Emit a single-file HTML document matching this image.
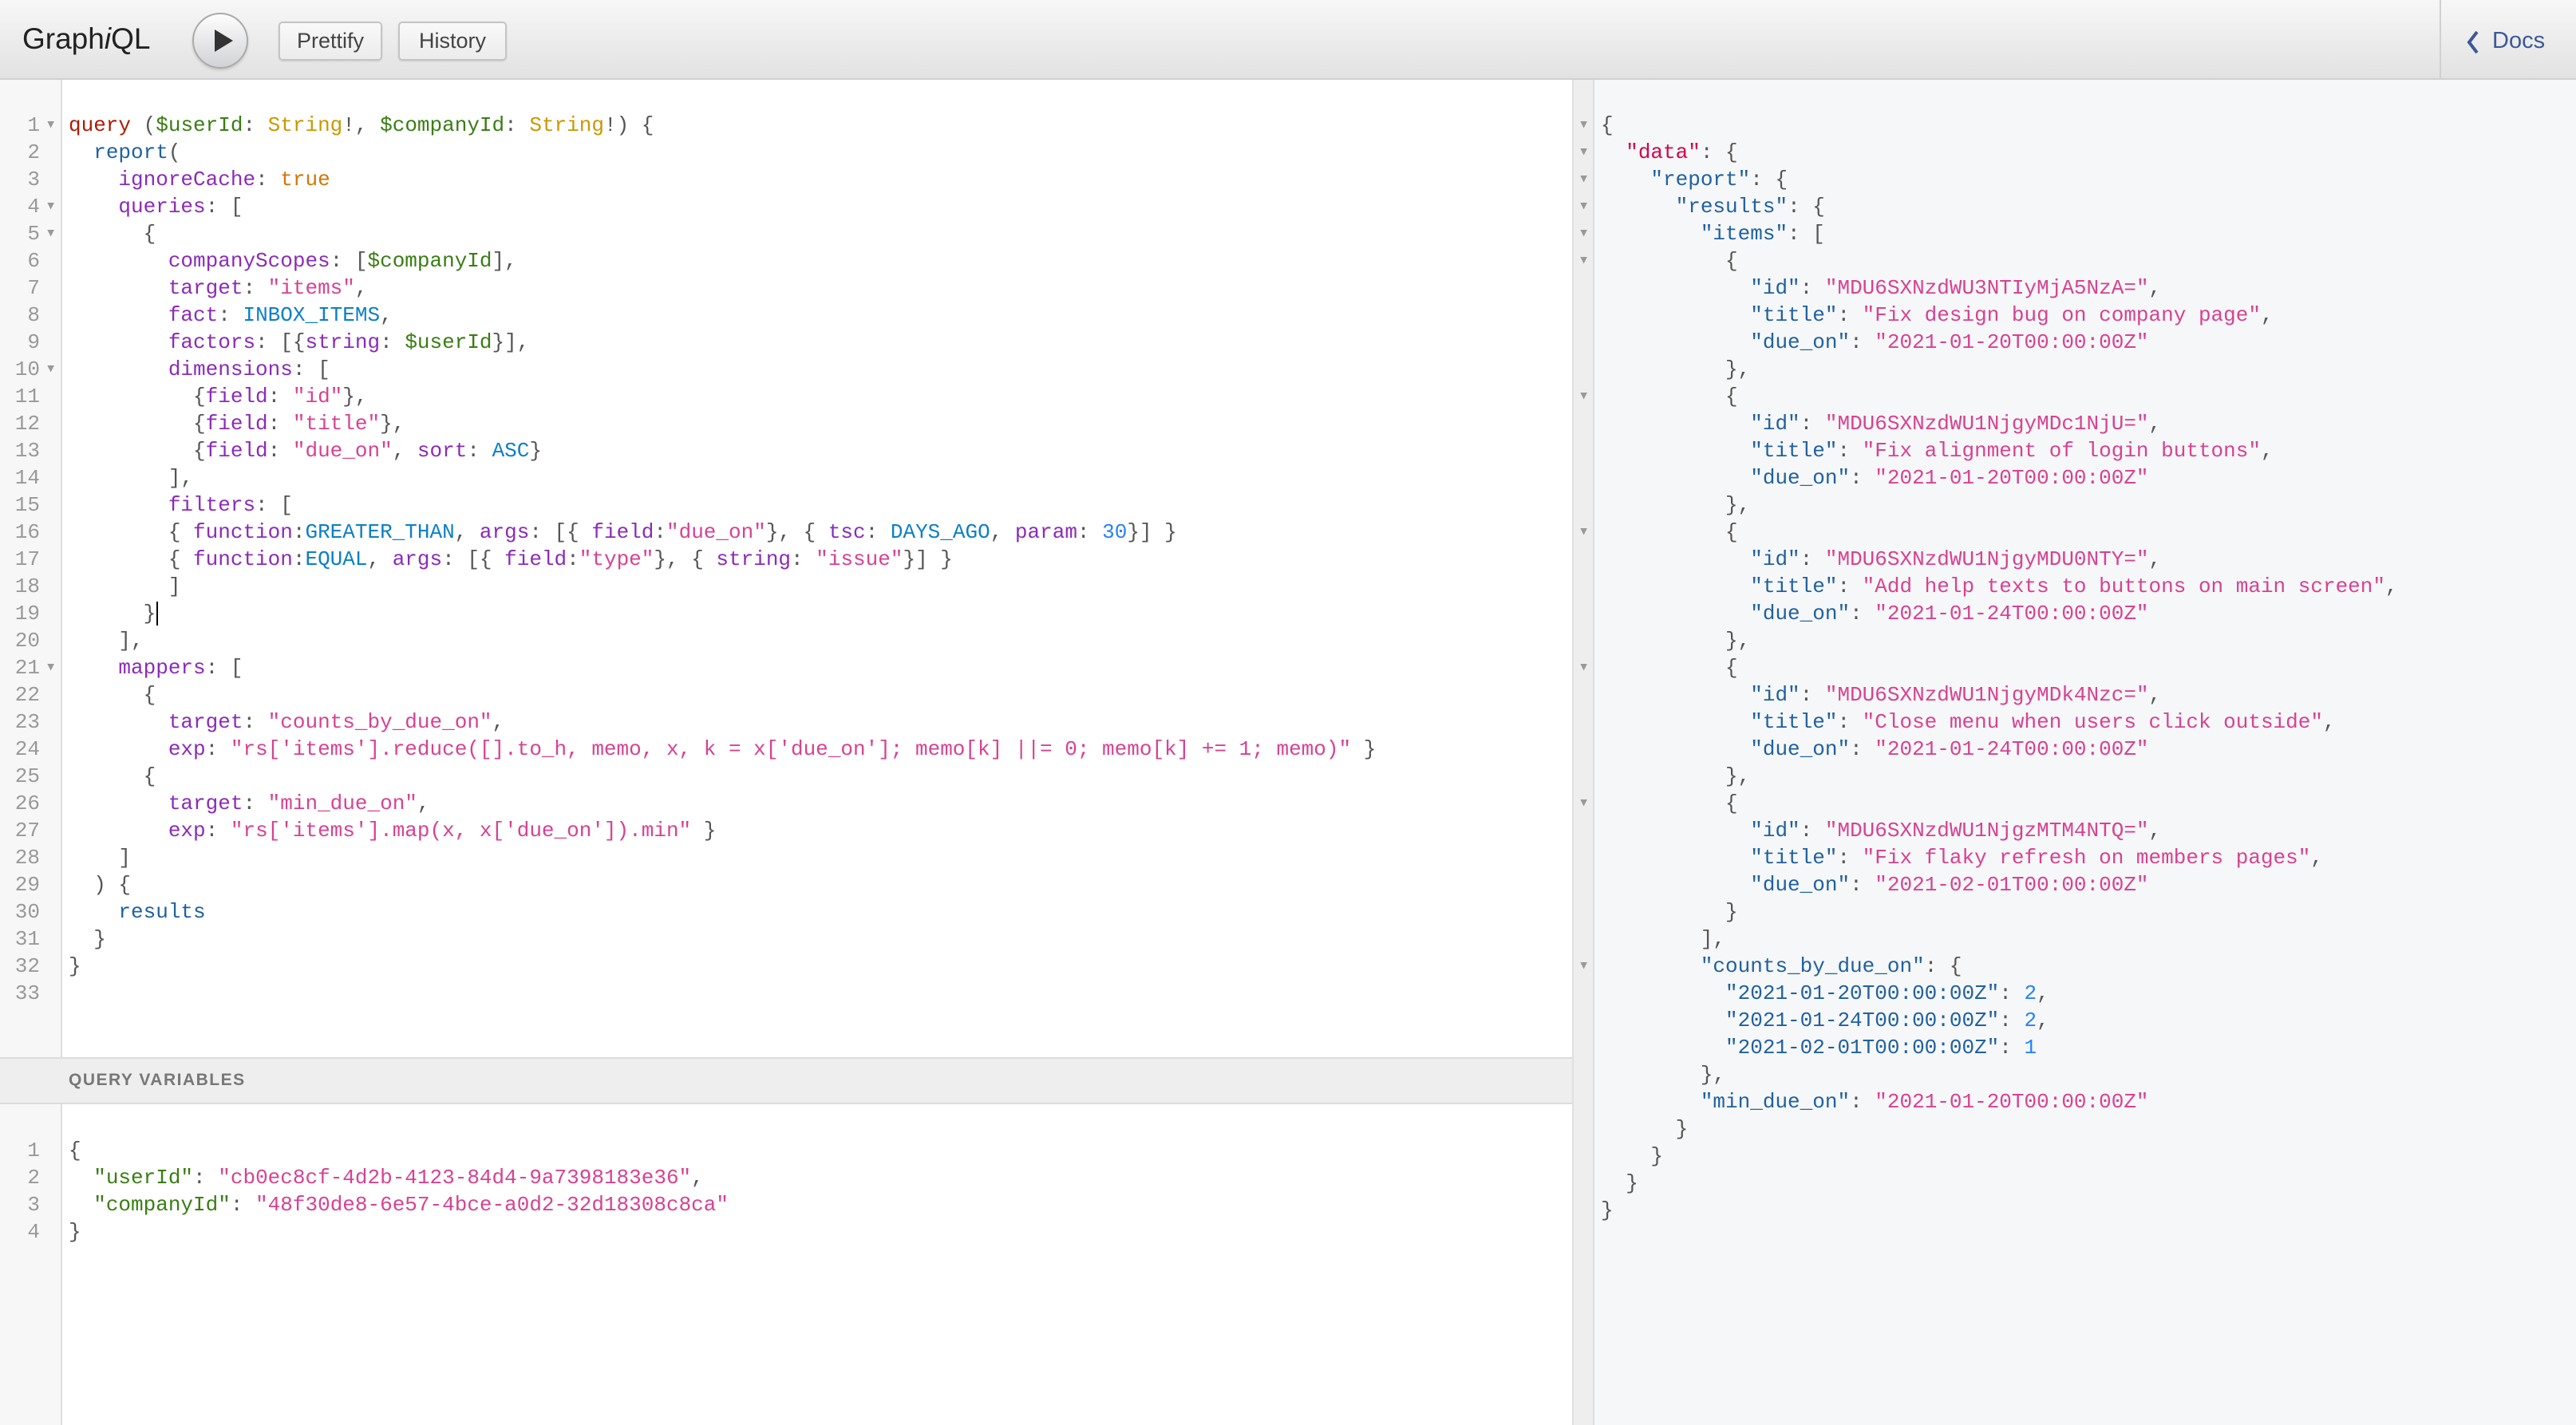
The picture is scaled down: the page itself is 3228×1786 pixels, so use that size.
<!DOCTYPE html>
<html><head><meta charset="utf-8"><style>
*{margin:0;padding:0;box-sizing:border-box}
html,body{width:3228px;height:1786px;overflow:hidden;background:#fff;font-family:"Liberation Sans",sans-serif}
.hdr{position:absolute;left:0;top:0;width:3228px;height:100px;background:linear-gradient(#f7f7f7,#e2e2e2);border-bottom:2px solid #d0d0d0}
.title{position:absolute;left:28px;top:28px;font-size:37px;color:#222}
.play{position:absolute;left:241px;top:16px;width:70px;height:70px;border-radius:50%;background:linear-gradient(#fdfdfd,#d2d3d6);border:2px solid #aaa;box-shadow:0 2px 3px rgba(0,0,0,.15)}
.play:after{content:"";position:absolute;left:26px;top:19px;border-left:23px solid #333;border-top:14px solid transparent;border-bottom:14px solid transparent}
.btn{position:absolute;top:27px;height:49px;border:2px solid #c4c4c4;border-radius:5px;background:linear-gradient(#f9f9f9,#ececec);font-size:27px;color:#444;text-align:center;line-height:44px;box-shadow:0 1px 2px rgba(0,0,0,.1)}
.docs{position:absolute;left:3057px;top:0;width:171px;height:98px;border-left:2px solid #d0d0d0;color:#3b5998;font-size:29px}
pre{position:absolute;font-family:"Liberation Mono",monospace;font-size:26px;line-height:34px;color:#555}
.ln{color:#999;text-align:right;width:50px;left:0}
.fold{color:#999;font-size:22px}
.k{color:#b11a04}.p{color:#1f61a0}.a{color:#8b2bb9}.v{color:#397d13}.t{color:#ca9800}.b{color:#d47509}.s{color:#d64292}.e{color:#0b7fc7}.n{color:#2882f9}.d{color:#d2054e}
</style></head><body>
<div class="hdr">
 <div class="title">Graph<i>i</i>QL</div>
 <div class="play"></div>
 <div class="btn" style="left:349px;width:130px">Prettify</div>
 <div class="btn" style="left:499px;width:136px">History</div>
 <div class="docs">
  <svg style="position:absolute;left:30px;top:38px" width="20" height="30" viewBox="0 0 20 30"><path d="M15 2 L5 15 L15 28" fill="none" stroke="#3b5998" stroke-width="4"/></svg>
  <span style="position:absolute;left:64px;top:35px">Docs</span>
 </div>
</div>

<!-- query editor -->
<div style="position:absolute;left:0;top:100px;width:78px;height:1686px;background:#f7f7f7;border-right:2px solid #ddd"></div>
<div style="position:absolute;left:1970px;top:100px;width:2px;height:1686px;background:#e0e0e0"></div>
<pre class="ln" style="top:140px">1
2
3
4
5
6
7
8
9
10
11
12
13
14
15
16
17
18
19
20
21
22
23
24
25
26
27
28
29
30
31
32
33</pre>
<pre class="fold" style="left:57px;top:140px">▾


▾
▾




▾










▾</pre>
<pre style="left:86px;top:140px"><span class="k">query</span> (<span class="v">$userId</span>: <span class="t">String</span>!, <span class="v">$companyId</span>: <span class="t">String</span>!) {
  <span class="p">report</span>(
    <span class="a">ignoreCache</span>: <span class="b">true</span>
    <span class="a">queries</span>: [
      {
        <span class="a">companyScopes</span>: [<span class="v">$companyId</span>],
        <span class="a">target</span>: <span class="s">"items"</span>,
        <span class="a">fact</span>: <span class="e">INBOX_ITEMS</span>,
        <span class="a">factors</span>: [{<span class="a">string</span>: <span class="v">$userId</span>}],
        <span class="a">dimensions</span>: [
          {<span class="a">field</span>: <span class="s">"id"</span>},
          {<span class="a">field</span>: <span class="s">"title"</span>},
          {<span class="a">field</span>: <span class="s">"due_on"</span>, <span class="a">sort</span>: <span class="e">ASC</span>}
        ],
        <span class="a">filters</span>: [
        { <span class="a">function</span>:<span class="e">GREATER_THAN</span>, <span class="a">args</span>: [{ <span class="a">field</span>:<span class="s">"due_on"</span>}, { <span class="a">tsc</span>: <span class="e">DAYS_AGO</span>, <span class="a">param</span>: <span class="n">30</span>}] }
        { <span class="a">function</span>:<span class="e">EQUAL</span>, <span class="a">args</span>: [{ <span class="a">field</span>:<span class="s">"type"</span>}, { <span class="a">string</span>: <span class="s">"issue"</span>}] }
        ]
      }<span style="border-left:2px solid #000;margin-left:1px"></span>
    ],
    <span class="a">mappers</span>: [
      {
        <span class="a">target</span>: <span class="s">"counts_by_due_on"</span>,
        <span class="a">exp</span>: <span class="s">"rs['items'].reduce([].to_h, memo, x, k = x['due_on']; memo[k] ||= 0; memo[k] += 1; memo)"</span> }
      {
        <span class="a">target</span>: <span class="s">"min_due_on"</span>,
        <span class="a">exp</span>: <span class="s">"rs['items'].map(x, x['due_on']).min"</span> }
    ]
  ) {
    <span class="p">results</span>
  }
}
</pre>

<!-- variables -->
<div style="position:absolute;left:0;top:1325px;width:1970px;height:59px;background:#eeeeee;border-top:2px solid #dcdcdc;border-bottom:2px solid #dcdcdc"></div>
<div style="position:absolute;left:86px;top:1342px;font-size:21px;font-weight:bold;color:#777;letter-spacing:1.5px">QUERY VARIABLES</div>
<pre class="ln" style="top:1425px">1
2
3
4</pre>
<pre style="left:86px;top:1425px">{
  <span class="v">"userId"</span>: <span class="s">"cb0ec8cf-4d2b-4123-84d4-9a7398183e36"</span>,
  <span class="v">"companyId"</span>: <span class="s">"48f30de8-6e57-4bce-a0d2-32d18308c8ca"</span>
}</pre>

<!-- results -->
<div style="position:absolute;left:1972px;top:100px;width:1256px;height:1686px;background:#f6f7f8"></div>
<div style="position:absolute;left:1972px;top:100px;width:26px;height:1686px;background:#eeeeee;border-right:2px solid #ddd"></div>
<pre class="fold" style="left:1978px;top:140px">▾
▾
▾
▾
▾
▾




▾




▾




▾




▾





▾</pre>
<pre style="left:2006px;top:140px">{
  <span class="d">"data"</span>: {
    <span class="p">"report"</span>: {
      <span class="p">"results"</span>: {
        <span class="p">"items"</span>: [
          {
            <span class="p">"id"</span>: <span class="s">"MDU6SXNzdWU3NTIyMjA5NzA="</span>,
            <span class="p">"title"</span>: <span class="s">"Fix design bug on company page"</span>,
            <span class="p">"due_on"</span>: <span class="s">"2021-01-20T00:00:00Z"</span>
          },
          {
            <span class="p">"id"</span>: <span class="s">"MDU6SXNzdWU1NjgyMDc1NjU="</span>,
            <span class="p">"title"</span>: <span class="s">"Fix alignment of login buttons"</span>,
            <span class="p">"due_on"</span>: <span class="s">"2021-01-20T00:00:00Z"</span>
          },
          {
            <span class="p">"id"</span>: <span class="s">"MDU6SXNzdWU1NjgyMDU0NTY="</span>,
            <span class="p">"title"</span>: <span class="s">"Add help texts to buttons on main screen"</span>,
            <span class="p">"due_on"</span>: <span class="s">"2021-01-24T00:00:00Z"</span>
          },
          {
            <span class="p">"id"</span>: <span class="s">"MDU6SXNzdWU1NjgyMDk4Nzc="</span>,
            <span class="p">"title"</span>: <span class="s">"Close menu when users click outside"</span>,
            <span class="p">"due_on"</span>: <span class="s">"2021-01-24T00:00:00Z"</span>
          },
          {
            <span class="p">"id"</span>: <span class="s">"MDU6SXNzdWU1NjgzMTM4NTQ="</span>,
            <span class="p">"title"</span>: <span class="s">"Fix flaky refresh on members pages"</span>,
            <span class="p">"due_on"</span>: <span class="s">"2021-02-01T00:00:00Z"</span>
          }
        ],
        <span class="p">"counts_by_due_on"</span>: {
          <span class="p">"2021-01-20T00:00:00Z"</span>: <span class="n">2</span>,
          <span class="p">"2021-01-24T00:00:00Z"</span>: <span class="n">2</span>,
          <span class="p">"2021-02-01T00:00:00Z"</span>: <span class="n">1</span>
        },
        <span class="p">"min_due_on"</span>: <span class="s">"2021-01-20T00:00:00Z"</span>
      }
    }
  }
}</pre>
</body></html>
